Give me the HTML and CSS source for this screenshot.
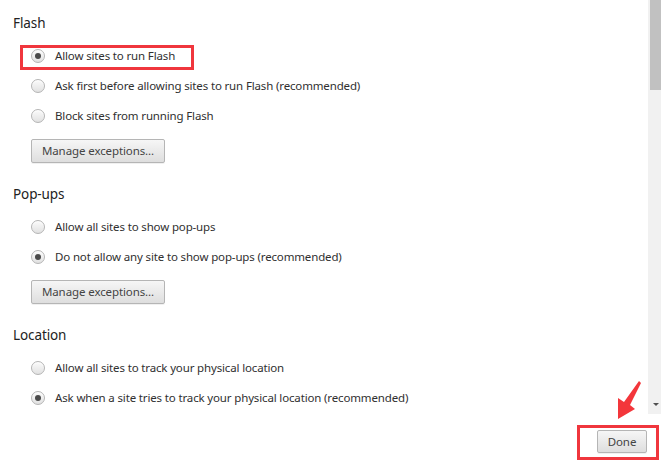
FILE: index.html
```html
<!DOCTYPE html>
<html>
<head>
<meta charset="utf-8">
<link rel="stylesheet" href="styles.css">
</head>
<body>
<div class="window">
  <div class="main">
    <div class="content">
      <section class="section">
        <h3 class="heading">Flash</h3>
        <div class="row"><span class="radio checked"></span><span class="label">Allow sites to run Flash</span></div>
        <div class="row"><span class="radio"></span><span class="label">Ask first before allowing sites to run Flash (recommended)</span></div>
        <div class="row"><span class="radio"></span><span class="label">Block sites from running Flash</span></div>
        <button class="btn manage">Manage exceptions...</button>
      </section>
      <section class="section">
        <h3 class="heading">Pop-ups</h3>
        <div class="row"><span class="radio"></span><span class="label">Allow all sites to show pop-ups</span></div>
        <div class="row"><span class="radio checked"></span><span class="label">Do not allow any site to show pop-ups (recommended)</span></div>
        <button class="btn manage">Manage exceptions...</button>
      </section>
      <section class="section">
        <h3 class="heading">Location</h3>
        <div class="row"><span class="radio"></span><span class="label">Allow all sites to track your physical location</span></div>
        <div class="row"><span class="radio checked"></span><span class="label">Ask when a site tries to track your physical location (recommended)</span></div>
      </section>
    </div>
    <div class="scrollbar">
      <div class="thumb"></div>
      <div class="arrow-down"></div>
    </div>
  </div>
  <div class="footer">
    <button class="btn done">Done</button>
  </div>

  <div class="mark mark-flash"></div>
  <div class="mark mark-done"></div>
  <svg class="pointer" width="30" height="42" viewBox="614 380 30 42">
    <polygon fill="#f3363b" points="639,381 641,383 630,405 635,409 618,419 618,398 624,402"/>
  </svg>
</div>
</body>
</html>
```

FILE: styles.css
```css
html, body {
  margin: 0;
  padding: 0;
  background: #fff;
}
body {
  font-family: "Noto Sans", "Open Sans", sans-serif;
  color: #303030;
}
.window {
  position: relative;
  width: 661px;
  height: 463px;
  overflow: hidden;
  display: flex;
  flex-direction: column;
}
.main {
  display: flex;
  height: 414px;
}
.content {
  flex: 1;
  padding: 13px 0 0 13px;
  display: flex;
  flex-direction: column;
  gap: 21px;
}
.section {
  display: flex;
  flex-direction: column;
  align-items: flex-start;
}
.heading {
  margin: 0 0 8px 0;
  font-size: 13.5px;
  font-weight: normal;
  line-height: 20px;
  color: #222;
  letter-spacing: -0.1px;
}
.row {
  display: flex;
  align-items: center;
  height: 30px;
  padding-left: 18px;
}
.radio {
  box-sizing: border-box;
  width: 14px;
  height: 14px;
  border-radius: 50%;
  border: 1px solid #b4b4b4;
  background: linear-gradient(#fbfbfb, #e1e1e1);
  box-shadow: inset 0 1px 1px rgba(255,255,255,0.8);
  display: flex;
  align-items: center;
  justify-content: center;
  flex: none;
}
.radio.checked::after {
  content: "";
  width: 6px;
  height: 6px;
  border-radius: 50%;
  background: #4a4a4a;
}
.label {
  margin-left: 10px;
  font-size: 11.5px;
  letter-spacing: -0.15px;
  line-height: 16px;
  white-space: nowrap;
}
.btn {
  box-sizing: border-box;
  font-family: "Noto Sans", "Open Sans", sans-serif;
  font-size: 11.5px;
  letter-spacing: -0.1px;
  color: #444;
  border: 1px solid #b5b5b5;
  border-radius: 2px;
  background: linear-gradient(#f6f6f6, #dedede);
  box-shadow: 0 1px 0 rgba(0,0,0,0.06);
  padding: 0;
  line-height: 20px;
}
.manage {
  margin: 8px 0 0 18px;
  width: 134px;
  height: 24px;
}
.scrollbar {
  position: relative;
  width: 13px;
  background: #f1f1f1;
  display: flex;
  flex-direction: column;
}
.thumb {
  margin-left: 2px;
  width: 11px;
  height: 90px;
  background: #c1c1c1;
}
.arrow-down {
  position: absolute;
  left: 5px;
  bottom: 8px;
  width: 0;
  height: 0;
  border-left: 3px solid transparent;
  border-right: 3px solid transparent;
  border-top: 3px solid #505050;
}
.footer {
  flex: 1;
  display: flex;
  justify-content: flex-end;
  align-items: flex-start;
  padding: 16px 14px 0 0;
}
.done {
  width: 50px;
  height: 23px;
}
.mark {
  position: absolute;
  border: 3px solid #f0363d;
  box-sizing: border-box;
}
.mark-flash {
  left: 20px;
  top: 45px;
  width: 174px;
  height: 25px;
}
.mark-done {
  left: 577px;
  top: 425px;
  width: 82px;
  height: 35px;
}
.pointer {
  position: absolute;
  left: 614px;
  top: 380px;
}
```
